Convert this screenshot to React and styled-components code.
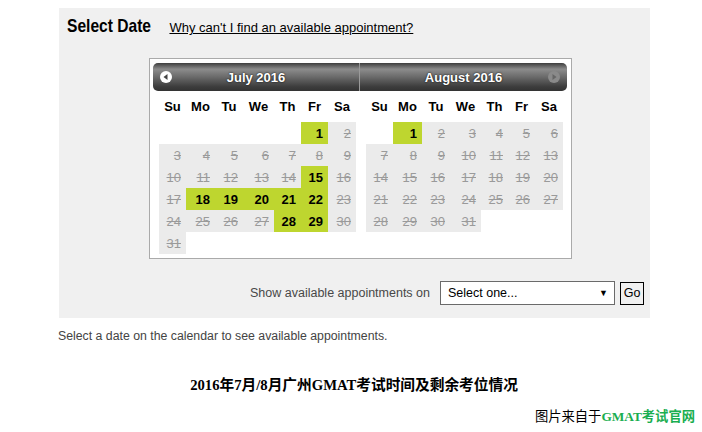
import styled, { createGlobalStyle } from 'styled-components';

const GlobalStyle = createGlobalStyle`
  body {
    margin: 0;
    background: #fff;
    font-family: "Liberation Sans", Arial, sans-serif;
  }
`;

// Farger
const panelColor = '#f0f0f0';
const greenCell = '#bed62f';
const grayCell = '#ebebeb';

const Page = styled.div`
  width: 702px;
  height: 432px;
  padding: 8px 0 0 58px;
  box-sizing: border-box;
  position: relative;
`;

const Panel = styled.div`
  margin-left: 1px;
  width: 591px;
  height: 310px;
  background: ${panelColor};
  box-sizing: border-box;
  padding: 7px 6px 0 8px;
  display: flex;
  flex-direction: column;
`;

const TitleRow = styled.div`
  display: flex;
  align-items: baseline;
  gap: 18px;
  height: 24px;
`;

// smal rubrik (ingen Arial Narrow, sa vi trycker ihop den)
const Title = styled.h2`
  display: inline-block;
  margin: 0 -18px 0 0;
  font-weight: bold;
  font-size: 19px;
  color: #000;
  transform: scaleX(0.82);
  transform-origin: left center;
  white-space: nowrap;
`;

const HelpLink = styled.a`
  font-size: 13px;
  color: #000;
  text-decoration: underline;
`;

const CalendarBox = styled.div`
  margin: 19px 0 0 82px;
  width: 423px;
  box-sizing: border-box;
  border: 1px solid #aaa;
  background: #fff;
  padding: 4px 3px;
  display: flex;
  align-items: flex-start;
`;

const Month = styled.div`
  width: ${(p) => p.$w}px;
  display: flex;
  flex-direction: column;
  align-items: ${(p) => (p.$side === 'left' ? 'flex-end' : 'flex-start')};
`;

const MonthHeader = styled.div`
  position: relative;
  flex-shrink: 0;
  align-self: stretch;
  height: 28px;
  display: flex;
  align-items: center;
  justify-content: center;
  background: linear-gradient(to bottom, #3e3e3e 0%, #8c8c8c 22%, #6a6a6a 50%, #3c3c3c 85%, #333 100%);
  border-radius: ${(p) => (p.$side === 'left' ? '5px 0 0 5px' : '0 5px 5px 0')};
  border-left: ${(p) => (p.$side === 'right' ? '1px solid #9a9a9a' : 'none')};
  color: #fff;
  font-weight: bold;
  font-size: 13px;
  text-shadow: 0 0 2px #000;
`;

const NavIcon = styled.svg`
  position: absolute;
  top: 8px;
  ${(p) => (p.$side === 'left' ? 'left: 7px;' : 'right: 7px;')}
`;

const DayTable = styled.table`
  border-collapse: collapse;
  table-layout: fixed;
  width: 197px;
  margin: 0 ${(p) => (p.$side === 'left' ? '3px' : '0')} 0 ${(p) => (p.$side === 'right' ? '7px' : '0')};
`;

const DayName = styled.th`
  height: 31px;
  padding: 0;
  font-size: 13px;
  font-weight: bold;
  text-align: center;
  color: #000;
`;

const DayCell = styled.td`
  height: 22px;
  padding: 0 5px 0 0;
  text-align: right;
  font-size: 13px;
  background: ${(p) => (p.$kind === 'open' ? greenCell : p.$kind === 'closed' ? grayCell : 'transparent')};
  color: ${(p) => (p.$kind === 'open' ? '#000' : '#9a9a9a')};
  font-weight: ${(p) => (p.$kind === 'open' ? 'bold' : 'normal')};
  text-decoration: ${(p) => (p.$kind === 'closed' ? 'line-through' : 'none')};
`;

const BottomRow = styled.div`
  margin-top: 22px;
  display: flex;
  justify-content: flex-end;
  align-items: center;
  gap: 10px;
`;

const ShowLabel = styled.span`
  font-size: 12.5px;
  color: #484848;
`;

const SelectBox = styled.div`
  width: 175px;
  height: 24px;
  box-sizing: border-box;
  border: 1px solid #6a6a6a;
  background: #fff;
  display: flex;
  align-items: center;
  justify-content: space-between;
  padding: 0 6px 0 7px;
  font-size: 12.5px;
  color: #000;
`;

const Arrow = styled.span`
  font-size: 9px;
`;

const GoButton = styled.button`
  margin-left: -5px;
  width: 24px;
  height: 23px;
  padding: 0;
  border: 1px solid #000;
  background: ${panelColor};
  font-family: "Liberation Sans", Arial, sans-serif;
  font-size: 12.5px;
  color: #000;
`;

const Hint = styled.p`
  margin: 11px 0 0;
  font-size: 12.3px;
  color: #444;
`;

const Caption = styled.h3`
  margin: 30px 0 0;
  width: 592px;
  text-align: center;
  font-family: "Liberation Serif", "Noto Sans CJK SC", serif;
  font-size: 14.7px;
  font-weight: bold;
  color: #000;
`;

const Source = styled.div`
  position: absolute;
  right: 7px;
  bottom: 7px;
  font-family: "Noto Sans CJK SC", sans-serif;
  font-size: 13.3px;
  color: #000;
`;

const SourceName = styled.span`
  font-family: "Liberation Serif", "Noto Sans CJK SC", serif;
  color: #1aae50;
  font-weight: bold;
`;

const colWidths = [27, 29, 28, 31, 27, 27, 28];
const dayNames = ['Su', 'Mo', 'Tu', 'We', 'Th', 'Fr', 'Sa'];

// start: veckodag for den 1:a, open: lediga datum
const months = [
  { side: 'left', w: 206, title: 'July 2016', start: 5, days: 31, open: [1, 15, 18, 19, 20, 21, 22, 28, 29] },
  { side: 'right', w: 208, title: 'August 2016', start: 1, days: 31, open: [1] },
];

const buildWeeks = (start, days) => {
  const cells = [];
  for (let i = 0; i < start; i++) cells.push(null);
  for (let d = 1; d <= days; d++) cells.push(d);
  while (cells.length % 7 !== 0) cells.push(null);
  const weeks = [];
  for (let i = 0; i < cells.length; i += 7) weeks.push(cells.slice(i, i + 7));
  return weeks;
};

const PrevIcon = () => (
  <NavIcon $side="left" width="12" height="12" viewBox="0 0 12 12">
    <circle cx="6" cy="6" r="6" fill="#fff" />
    <path d="M3.5 6 L7.5 3 L7.5 9 Z" fill="#444" />
  </NavIcon>
);

const NextIcon = () => (
  <NavIcon $side="right" width="12" height="12" viewBox="0 0 12 12">
    <circle cx="6" cy="6" r="6" fill="#8a8a8a" />
    <path d="M8.5 6 L4.5 3 L4.5 9 Z" fill="#666" />
  </NavIcon>
);

const MonthView = ({ month }) => {
  const weeks = buildWeeks(month.start, month.days);
  return (
    <Month $w={month.w} $side={month.side}>
      <MonthHeader $side={month.side}>
        {month.side === 'left' ? <PrevIcon /> : <NextIcon />}
        {month.title}
      </MonthHeader>
      <DayTable $side={month.side}>
        <colgroup>
          {colWidths.map((w, i) => (
            <col key={i} style={{ width: w }} />
          ))}
        </colgroup>
        <thead>
          <tr>
            {dayNames.map((n) => (
              <DayName key={n}>{n}</DayName>
            ))}
          </tr>
        </thead>
        <tbody>
          {weeks.map((week, wi) => (
            <tr key={wi}>
              {week.map((d, di) => (
                <DayCell key={di} $kind={d == null ? 'empty' : month.open.includes(d) ? 'open' : 'closed'}>
                  {d}
                </DayCell>
              ))}
            </tr>
          ))}
        </tbody>
      </DayTable>
    </Month>
  );
};

const App = () => (
  <Page>
    <GlobalStyle />
    <Panel>
      <TitleRow>
        <Title>Select Date</Title>
        <HelpLink href="#">Why can't I find an available appointment?</HelpLink>
      </TitleRow>
      <CalendarBox>
        {months.map((m) => (
          <MonthView key={m.title} month={m} />
        ))}
      </CalendarBox>
      <BottomRow>
        <ShowLabel>Show available appointments on</ShowLabel>
        <SelectBox>
          Select one...
          <Arrow>▼</Arrow>
        </SelectBox>
        <GoButton>Go</GoButton>
      </BottomRow>
    </Panel>
    <Hint>Select a date on the calendar to see available appointments.</Hint>
    <Caption>2016年7月/8月广州GMAT考试时间及剩余考位情况</Caption>
    <Source>
      图片来自于<SourceName>GMAT考试官网</SourceName>
    </Source>
  </Page>
);

export default App;
